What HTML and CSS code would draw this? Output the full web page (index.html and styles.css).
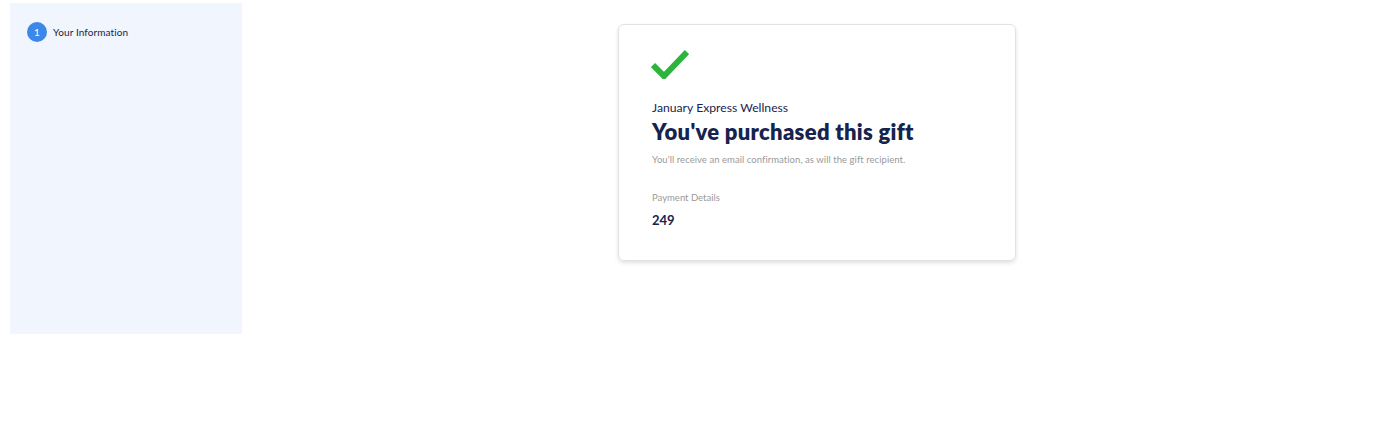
FILE: index.html
```html
<!DOCTYPE html>
<html>
<head>
<meta charset="utf-8">
<link rel="stylesheet" href="styles.css">
</head>
<body>
<div class="page">
  <aside class="sidebar">
    <div class="step">
      <span class="step-num">1</span>
      <span class="step-label">Your Information</span>
    </div>
  </aside>
  <main class="main">
    <div class="card">
      <svg class="check" width="38" height="30" viewBox="0 0 38 30">
        <path d="M2 16 L13 27 L36 3" fill="none" stroke="#2db43c" stroke-width="6"/>
      </svg>
      <div class="vendor">January Express Wellness</div>
      <h1 class="title">You've purchased this gift</h1>
      <p class="note">You'll receive an email confirmation, as will the gift recipient.</p>
      <div class="label">Payment Details</div>
      <div class="amount">249</div>
    </div>
  </main>
</div>
</body>
</html>
```
FILE: styles.css
```css
html, body {
  margin: 0;
  padding: 0;
  background: #fff;
  font-family: Lato, "Open Sans", sans-serif;
}
.page {
  display: flex;
  align-items: flex-start;
  padding: 3px 8px 0 10px;
}
.sidebar {
  width: 232px;
  height: 331px;
  background: #f0f5fe;
  box-sizing: border-box;
  padding: 19px 0 0 17px;
}
.step {
  display: flex;
  align-items: center;
  gap: 6px;
}
.step-num {
  width: 20px;
  height: 20px;
  border-radius: 50%;
  background: #3b87ea;
  color: #fff;
  font-size: 10px;
  display: flex;
  align-items: center;
  justify-content: center;
}
.step-label {
  font-size: 10px;
  letter-spacing: 0.1px;
  color: #1d2440;
}
.main {
  flex: 1;
  display: flex;
  justify-content: center;
  padding-top: 21px;
}
.card {
  width: 398px;
  height: 237px;
  box-sizing: border-box;
  border: 1px solid #e2e2e2;
  border-radius: 6px;
  box-shadow: 0 2px 4px rgba(0,0,0,0.12);
  padding: 24px 33px 0;
}
.check {
  display: block;
  margin-left: -1px;
}
.vendor {
  margin-top: 21px;
  font-size: 12.2px;
  color: #1a2550;
  line-height: 16px;
}
.title {
  margin: 2px 0 0;
  font-size: 22px;
  font-weight: 800;
  color: #15234d;
  line-height: 28px;
  letter-spacing: 0.3px;
}
.note {
  margin: 8px 0 0;
  font-size: 9.5px;
  color: #9a9a9a;
  line-height: 12px;
  letter-spacing: 0.05px;
}
.label {
  margin-top: 26px;
  font-size: 9.5px;
  color: #9a9a9a;
  line-height: 12px;
}
.amount {
  margin-top: 8px;
  font-size: 13px;
  font-weight: 700;
  color: #15234d;
  line-height: 16px;
}
```
